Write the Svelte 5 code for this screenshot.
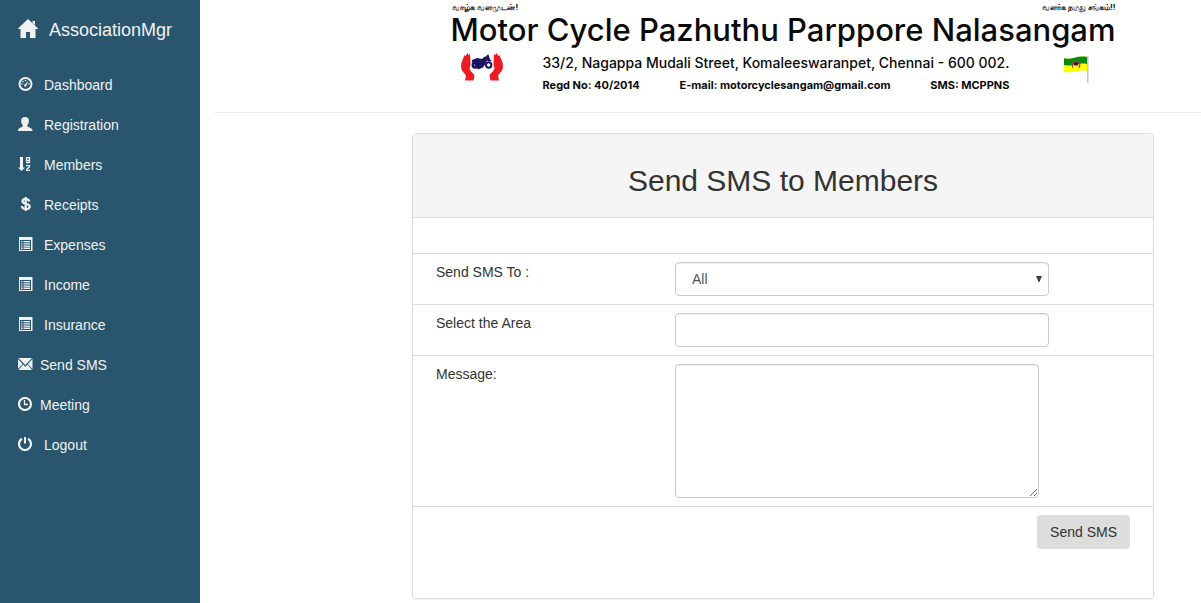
<script>
  const links = [
    { label: 'Dashboard', icon: 'dashboard' },
    { label: 'Registration', icon: 'user' },
    { label: 'Members', icon: 'sort' },
    { label: 'Receipts', icon: 'dollar' },
    { label: 'Expenses', icon: 'list' },
    { label: 'Income', icon: 'list' },
    { label: 'Insurance', icon: 'list' },
    { label: 'Send SMS', icon: 'envelope', tight: true },
    { label: 'Meeting', icon: 'clock', tight: true },
    { label: 'Logout', icon: 'power' }
  ];

  let recipient = $state('All');
  let area = $state('');
  let message = $state('');
</script>

<div class="page">
  <nav class="sidebar">
    <a class="brand" href="#home">
      <svg width="20" height="19" viewBox="0 0 20 19" aria-hidden="true">
        <path d="M10 0 20 9.500v.5h-2.500v9H12v-6H8v6H2.500v-9H0v-.5zM14.500 2H17v4l-2.500-2z" fill="currentColor" />
      </svg>
      <span>AssociationMgr</span>
    </a>
    <ul>
      {#each links as link}
        <li>
          <a href="#{link.label}" class:tight={link.tight}>
            <svg width="15" height="14" viewBox="0 0 15 14" fill="currentColor" aria-hidden="true">
              {#if link.icon === 'dashboard'}
                <circle cx="7.500" cy="7" r="6" fill="none" stroke="currentColor" stroke-width="2" />
                <circle cx="4" cy="7" r=".8" />
                <circle cx="5" cy="4.500" r=".8" />
                <circle cx="7.500" cy="3.500" r=".8" />
                <circle cx="11" cy="7" r=".8" />
                <path d="M10.500 3.800 8.500 8.300a1.200 1.200 0 1 1-1.500-1z" />
              {:else if link.icon === 'user'}
                <path d="M7 0c2.700 0 4 1.600 3.900 3.900 0 1.700-.5 3.200-1.500 4.200v1.100c.2.900 5.100 2 5.100 3.800v1H0v-1c0-1.800 4.500-2.900 4.700-3.800V8.100c-1-1-1.500-2.500-1.500-4.200C3.100 1.600 4.300 0 7 0z" />
              {:else if link.icon === 'sort'}
                <path d="M2 0h3v10.500h2L3.500 14 0 10.500h2z" />
                <path d="M8.500.5h3v5H8M8.500.5v3h3M8 8.600h3.500v1.200L8.500 12.500v1h3.500" fill="none" stroke="currentColor" stroke-width="1.300" />
              {:else if link.icon === 'dollar'}
                <path d="M11.200 4.500C11 2.800 9.800 2 7.700 2 5.700 2 4.500 2.800 4.500 4.200c0 3.300 7.200 1.700 7.200 5.200 0 1.600-1.600 2.600-3.800 2.600-2.400 0-3.900-1.100-4-3M7.700 0v14" fill="none" stroke="currentColor" stroke-width="2.200" />
              {:else if link.icon === 'list'}
                <path fill-rule="evenodd" d="M1 0h13.500v14H1zM2 3v10h11V3z" />
                <path d="M3 4h1.500v1.300H3zm2.500 0H12v1.300H5.500zM3 6.200h1.500v1.300H3zm2.500 0H12v1.300H5.500zM3 8.400h1.500v1.300H3zm2.500 0H12v1.300H5.500zM3 10.600h1.500v1.300H3zm2.500 0H12v1.300H5.500z" />
              {:else if link.icon === 'envelope'}
                <path d="M.5 1h13.500L7.300 8zM0 2 4.600 7 0 12zM14.500 2v10L9.900 7zM5.100 7.500l2.200 2.300 2.200-2.300L14 13H.5z" />
              {:else if link.icon === 'clock'}
                <circle cx="7" cy="7" r="6" fill="none" stroke="currentColor" stroke-width="2.200" />
                <path d="M6.500 3v4.500H10" fill="none" stroke="currentColor" stroke-width="1.300" />
              {:else}
                <path d="M4 1.800A6 6 0 1 0 10 1.800" fill="none" stroke="currentColor" stroke-width="2.200" />
                <path d="M6 0h2v6.500H6z" />
              {/if}
            </svg>
            <span>{link.label}</span>
          </a>
        </li>
      {/each}
    </ul>
  </nav>

  <main>
    <header>
      <div class="banner">
        <div class="motto" lang="ta">
          <span>வாழ்க வளமுடன்!</span>
          <span>வளர்க நமது சங்கம்!!</span>
        </div>
        <h1>Motor Cycle Pazhuthu Parppore Nalasangam</h1>
        <div class="details">
          <svg class="hands" width="42" height="28" viewBox="0 0 42 28" aria-hidden="true">
            <g fill="#ec1c24">
              <path d="M1.500 7 3.500 2l1 1 2-3 .8 2L9 1l.5 8c-.2 3 0 4-1 6 0 3 4 5 5 7.500l-1 5H4l1-5C2 19 0 17 0 13c0-2 .5-4 1.500-6z" />
              <path d="M40.500 7 38.500 2l-1 1-2-3-.8 2L33 1l-.5 8c.2 3 0 4 1 6 0 3-4 5-5 7.500l1 5H38l-1-5c3-3.500 5-5.500 5-9.500 0-2-.5-4-1.500-6z" />
            </g>
            <g fill="#1b1464">
              <path d="m11 7 5-2 5 1 2-2 3-1-.5-1 2-.5 1.500 5 2 1-3 1-2-1-2 4-2 3-5 2-3-4-1-3-2-.5z" />
              <path fill-rule="evenodd" d="M10.500 12a3.700 3.700 0 1 1 7.400 0 3.700 3.700 0 0 1-7.400 0zm2.700 0a1 1 0 1 0 2 0 1 1 0 0 0-2 0zM24 12a3.700 3.700 0 1 1 7.400 0 3.700 3.700 0 0 1-7.400 0zm2 0a1.700 1.700 0 1 0 3.400 0 1.700 1.700 0 0 0-3.400 0z" />
            </g>
          </svg>
          <div class="contact">
            <p class="address">33/2, Nagappa Mudali Street, Komaleeswaranpet, Chennai - 600 002.</p>
            <p class="meta">
              <span>Regd No: 40/2014</span>
              <span>E-mail: motorcyclesangam@gmail.com</span>
              <span>SMS: MCPPNS</span>
            </p>
          </div>
          <svg class="flag" width="26" height="29" viewBox="0 0 26 29" aria-hidden="true">
            <path d="M0 3c7 3 12-3 23-1v14c-9-2-15 3-23 1z" fill="#ff0" />
            <path d="M0 3c7 3 12-3 23-1v7c-9-2-15 3-23 1z" fill="#078a13" />
            <path d="M9 12.500c-2-3 0-6 3-6s5 3 3 6" fill="none" stroke="#c8342b" stroke-width="1.500" />
            <path d="M10 8.500 12 7l2.500 1.500-1 2h-3z" fill="#1b1464" />
            <path d="M23 1h1.500v27H23z" fill="#b9c6e6" />
          </svg>
        </div>
      </div>
    </header>

    <form class="panel" onsubmit={(event) => event.preventDefault()}>
      <h2>Send SMS to Members</h2>
      <div class="row blank"></div>
      <div class="row">
        <label for="recipient">Send SMS To :</label>
        <div class="select">
          <select id="recipient" bind:value={recipient}>
            <option>All</option>
            <option>Area</option>
          </select>
          <svg width="6" height="6" viewBox="0 0 6 6" aria-hidden="true"><path d="M0 0h6L3.500 6h-1z" fill="#444" /></svg>
        </div>
      </div>
      <div class="row">
        <label for="area">Select the Area</label>
        <input id="area" type="text" bind:value={area} />
      </div>
      <div class="row">
        <label for="message">Message:</label>
        <textarea id="message" bind:value={message}></textarea>
      </div>
      <div class="row actions">
        <button type="submit">Send SMS</button>
      </div>
    </form>
  </main>
</div>

<style>
  :global(body) {
    margin: 0;
    background: #fff;
  }

  .page,
  .page * {
    box-sizing: border-box;
  }

  .page {
    display: grid;
    grid-template-columns: 200px minmax(0, 1fr);
    min-height: 100vh;
    font: 14px/20px "Liberation Sans", Arial, sans-serif;
    color: #333;
  }

  .sidebar {
    background: #29566e;
    color: #f1f1f1;
  }

  .sidebar a {
    display: flex;
    color: inherit;
    text-decoration: none;
  }

  .brand {
    gap: 11px;
    align-items: center;
    padding: 20px 18px 25px;
    font-size: 18px;
    line-height: 20px;
  }

  .brand svg {
    margin-top: -4px;
  }

  ul {
    margin: 0;
    padding: 0;
    list-style: none;
  }

  li a {
    gap: 11px;
    padding: 10px 18px;
  }

  li a.tight {
    gap: 7px;
  }

  li svg {
    flex: none;
    margin-top: 2px;
  }

  main {
    padding-left: 14px;
  }

  header {
    display: flex;
    justify-content: center;
    padding: 3px 47px 0 198px;
    border-bottom: 1px solid #eee;
    color: #0a0a0a;
    font-family: Inter, sans-serif;
  }

  .motto {
    display: flex;
    justify-content: space-between;
    padding-left: 2px;
    font-size: 8px;
    line-height: 8px;
    font-weight: 700;
  }

  h1 {
    margin: 0;
    font-size: 31px;
    line-height: 38px;
    font-weight: 500;
    white-space: nowrap;
  }

  .details {
    display: flex;
    justify-content: space-between;
    padding: 4px 25px 17px 11px;
  }

  .flag {
    margin-top: 2px;
  }

  .contact {
    margin-right: 16px;
  }

  .contact p {
    margin: 0;
    white-space: nowrap;
  }

  .contact .address {
    font-size: 14px;
    line-height: 20px;
    font-weight: 500;
  }

  .contact .meta {
    display: flex;
    justify-content: space-between;
    padding-top: 2px;
    font-size: 11px;
    line-height: 20px;
    font-weight: 700;
  }

  .panel {
    margin: 20px 47px 4px 198px;
    border: 1px solid #ddd;
    border-radius: 4px;
    box-shadow: 0 1px 1px rgba(0, 0, 0, 0.05);
  }

  h2 {
    margin: 0;
    padding: 30px 15px 20px;
    background: #f5f5f5;
    border-radius: 3px 3px 0 0;
    font-size: 30px;
    line-height: 33px;
    font-weight: 400;
    text-align: center;
  }

  .row {
    display: grid;
    grid-template-columns: 239px minmax(0, 1fr);
    align-items: start;
    padding: 8px 104px 8px 23px;
    border-top: 1px solid #ddd;
  }

  .blank {
    height: 36px;
  }

  select,
  input,
  textarea {
    display: block;
    width: 100%;
    height: 34px;
    margin: 0;
    padding: 6px 12px;
    border: 1px solid #ccc;
    border-radius: 4px;
    background: #fff;
    box-shadow: inset 0 1px 1px rgba(0, 0, 0, 0.075);
    color: #555;
    font: inherit;
  }

  .select {
    position: relative;
  }

  select {
    appearance: none;
    padding: 6px 16px;
  }

  .select svg {
    position: absolute;
    right: 7px;
    top: 14px;
    pointer-events: none;
  }

  textarea {
    width: calc(100% - 10px);
    height: 134px;
  }

  .actions {
    display: flex;
    justify-content: flex-end;
    padding: 8px 23px 49px;
  }

  button {
    height: 34px;
    padding: 6px 13px;
    border: 0;
    border-radius: 4px;
    background: #ddd;
    color: #333;
    font: inherit;
  }
</style>
